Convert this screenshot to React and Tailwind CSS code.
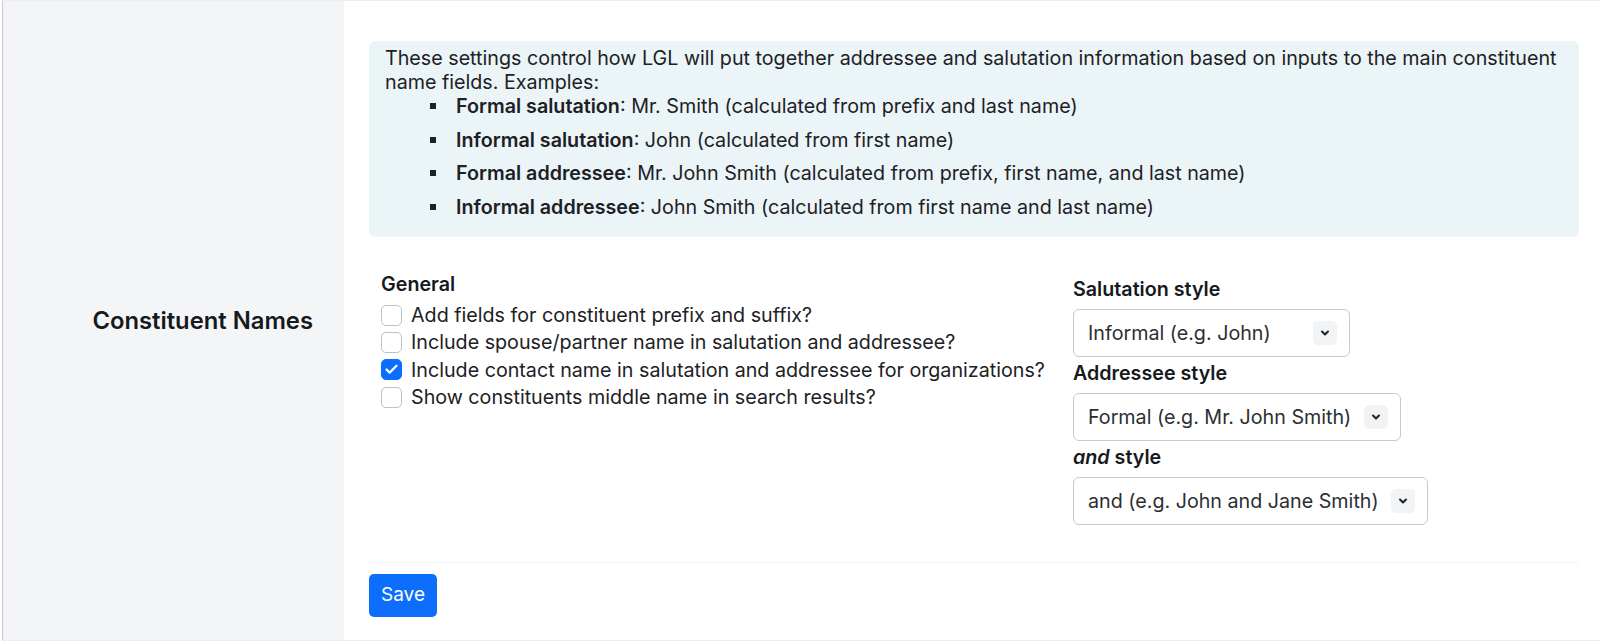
import { Check } from 'lucide-react';

const examples = [
  { term: 'Formal salutation', text: 'Mr. Smith (calculated from prefix and last name)' },
  { term: 'Informal salutation', text: 'John (calculated from first name)' },
  { term: 'Formal addressee', text: 'Mr. John Smith (calculated from prefix, first name, and last name)' },
  { term: 'Informal addressee', text: 'John Smith (calculated from first name and last name)' },
];

const options = [
  { label: 'Add fields for constituent prefix and suffix?', checked: false },
  { label: 'Include spouse/partner name in salutation and addressee?', checked: false },
  { label: 'Include contact name in salutation and addressee for organizations?', checked: true },
  { label: 'Show constituents middle name in search results?', checked: false },
];

const Checkbox = ({ checked }) => (
  <span
    className={`flex items-center justify-center w-[21px] h-[21px] shrink-0 rounded-[5px] border ${
      checked ? 'bg-[#0d6efd] border-[#0d6efd]' : 'bg-white border-[#bcc2ca]'
    }`}
  >
    {checked && <Check size={15} strokeWidth={3.5} className="text-white" />}
  </span>
);

const Select = ({ value, width }) => (
  <div className={`flex items-center justify-between h-[48px] ${width} pl-[14px] pr-[12px] rounded-[6px] border border-[#c5cad3] bg-white`}>
    <span className="text-[#2b2f33] whitespace-nowrap">{value}</span>
    <span className="flex items-center justify-center w-6 h-6 shrink-0 rounded-[5px] bg-[#f1f3f5]">
      <svg width="10" height="10" viewBox="0 0 10 10">
        <path d="M2 3.5 L5 6.5 L8 3.5" fill="none" stroke="#1f2328" strokeWidth="2" strokeLinecap="round" strokeLinejoin="round" />
      </svg>
    </span>
  </div>
);

export default function App() {
  return (
    <div className="bg-white font-['Inter',sans-serif] text-[19.7px] text-[#1d2125]">
      <div className="flex h-[641px] ml-[2px] border-l border-t border-b border-l-[#c9cdd3] border-t-[#eceef1] border-b-[#eceef1]">
        {/* section label */}
        <div className="w-[341px] shrink-0 bg-[#f4f5f7] flex items-center justify-end pr-[31px]">
          <h2 className="text-[23.8px] font-semibold text-[#16191d]">Constituent Names</h2>
        </div>

        <div className="flex-1 pl-[25px] pr-[21px] pt-[40px]">
          {/* help box */}
          <div className="rounded-[6px] bg-[#ebf4f7] pl-[16px] pr-2 pt-[5px] pb-[18px] leading-6">
            <p>
              These settings control how LGL will put together addressee and salutation information based on inputs to the main constituent name fields. Examples:
            </p>
            <ul className="space-y-[9.5px] pl-[45px]">
              {examples.map((ex) => (
                <li key={ex.term} className="flex items-center gap-[20px]">
                  <span className="w-[6px] h-[6px] bg-[#1d2125] shrink-0" />
                  <span>
                    <b className="font-semibold">{ex.term}</b>: {ex.text}
                  </span>
                </li>
              ))}
            </ul>
          </div>

          {/* settings */}
          <div className="flex mt-[35px] leading-6">
            <div className="w-[704px] shrink-0 pl-[12px]">
              <div className="font-semibold text-[#16191d] mb-[6px]">General</div>
              {options.map((opt) => (
                <label key={opt.label} className="flex items-center gap-[9px] h-[27.3px]">
                  <Checkbox checked={opt.checked} />
                  <span className="whitespace-nowrap">{opt.label}</span>
                </label>
              ))}
            </div>

            <div className="pt-[5px]">
              <div className="font-semibold text-[#16191d] mb-[8px]">Salutation style</div>
              <Select value="Informal (e.g. John)" width="w-[277px]" />
              <div className="font-semibold text-[#16191d] mt-[4px] mb-[8px]">Addressee style</div>
              <Select value="Formal (e.g. Mr. John Smith)" width="w-[328px]" />
              <div className="font-semibold text-[#16191d] mt-[4px] mb-[8px]">
                <i>and</i> style
              </div>
              <Select value="and (e.g. John and Jane Smith)" width="w-[355px]" />
            </div>
          </div>

          <div className="mt-[37px] border-t border-[#f3f4f6] pt-[11px]">
            <button className="h-[43px] px-3 rounded-[5px] bg-[#0d6efd] text-white text-[19px]">Save</button>
          </div>
        </div>
      </div>
    </div>
  );
}
